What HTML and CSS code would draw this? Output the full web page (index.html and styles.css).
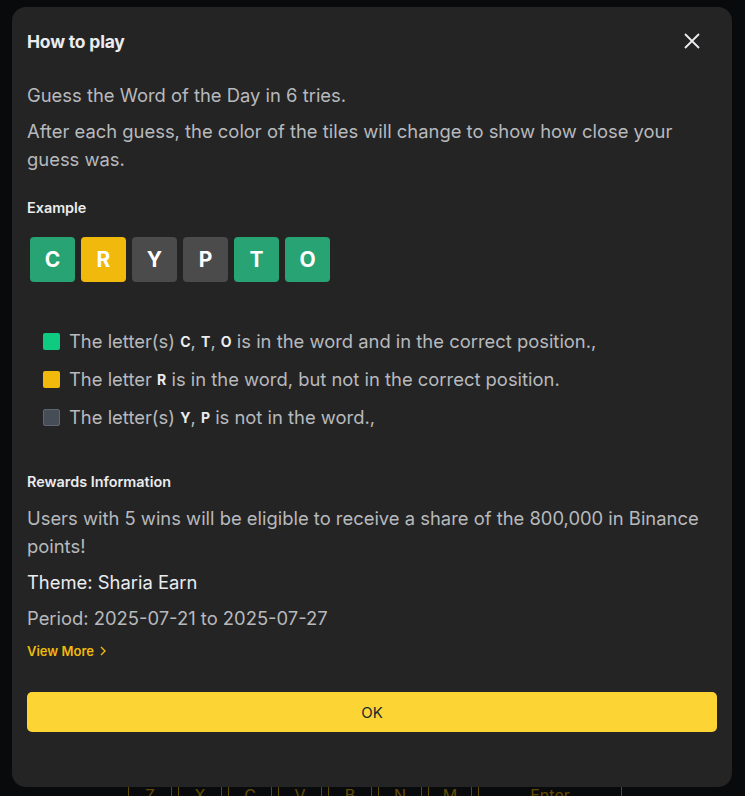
FILE: index.html
```html
<!DOCTYPE html>
<html lang="en">
<head>
    <meta charset="UTF-8">
    <meta name="viewport" content="width=device-width, initial-scale=1.0">
    <title>How to play</title>
    <link rel="stylesheet" href="styles.css">
</head>
<body>
    <div class="keyboard">
        <div class="key">Z</div>
        <div class="key">X</div>
        <div class="key">C</div>
        <div class="key">V</div>
        <div class="key">B</div>
        <div class="key">N</div>
        <div class="key">M</div>
        <div class="key key-wide">Enter</div>
    </div>

    <div class="overlay">
        <div class="modal">
            <div class="modal-header">
                <h2>How to play</h2>
                <button class="close-button" aria-label="Close">
                    <svg width="16" height="16" viewBox="0 0 16 16">
                        <path d="M1 1L15 15M15 1L1 15" stroke="#EAECEF" stroke-width="1.8" fill="none"/>
                    </svg>
                </button>
            </div>

            <p class="text">Guess the Word of the Day in 6 tries.</p>
            <p class="text">After each guess, the color of the tiles will change to show how close your guess was.</p>

            <h3 class="section-title title-example">Example</h3>
            <div class="tiles">
                <div class="tile green">C</div>
                <div class="tile yellow">R</div>
                <div class="tile gray">Y</div>
                <div class="tile gray">P</div>
                <div class="tile green">T</div>
                <div class="tile green">O</div>
            </div>

            <ul class="legend">
                <li><span class="swatch swatch-green"></span>The letter(s) <b>C</b>, <b>T</b>, <b>O</b> is in the word and in the correct position.,</li>
                <li><span class="swatch swatch-yellow"></span>The letter <b>R</b> is in the word, but not in the correct position.</li>
                <li><span class="swatch swatch-gray"></span>The letter(s) <b>Y</b>, <b>P</b> is not in the word.,</li>
            </ul>

            <h3 class="section-title title-rewards">Rewards Information</h3>
            <p class="text">Users with 5 wins will be eligible to receive a share of the 800,000 in Binance points!</p>
            <p class="text theme">Theme: Sharia Earn</p>
            <p class="text">Period: 2025-07-21 to 2025-07-27</p>
            <a class="view-more" href="#">View More
                <svg width="8" height="10" viewBox="0 0 8 10">
                    <path d="M2 1L6 5L2 9" stroke="#F0B90B" stroke-width="1.4" fill="none"/>
                </svg>
            </a>

            <button class="ok-button">OK</button>
        </div>
    </div>
</body>
</html>
```

FILE: styles.css
```css
body {
    font-family: 'Inter', 'Liberation Sans', sans-serif;
    background-color: #161a1e;
    margin: 0;
    padding: 0;
    height: 796px;
    overflow: hidden;
    position: relative;
}
.keyboard {
    position: absolute;
    top: 760px;
    left: 128px;
    display: flex;
    gap: 6px;
}
.key {
    width: 42px;
    height: 44px;
    border: 1px solid #F0B90B;
    border-radius: 4px;
    color: #F0B90B;
    font-size: 16px;
    display: flex;
    justify-content: center;
    align-items: center;
    padding-top: 12px;
    box-sizing: content-box;
}
.key-wide {
    width: 142px;
}
.overlay {
    position: absolute;
    inset: 0;
    background-color: rgba(0, 0, 0, 0.6);
}
.modal {
    position: absolute;
    top: 7px;
    left: 12px;
    width: 720px;
    height: 780px;
    box-sizing: border-box;
    padding: 23px 15px 0 15px;
    background-color: #242424;
    border-radius: 14px;
    color: #B7BDC6;
}
.modal-header {
    display: flex;
    justify-content: space-between;
    align-items: center;
    height: 22px;
    margin-bottom: 29px;
}
.modal-header h2 {
    margin: 0;
    font-size: 17.5px;
    font-weight: 700;
    letter-spacing: -0.2px;
    color: #EAECEF;
}
.close-button {
    background: none;
    border: none;
    padding: 0;
    margin-right: 17px;
    cursor: pointer;
    display: flex;
}
.text {
    margin: 0 0 8px 0;
    font-size: 18.4px;
    line-height: 28px;
    color: #B7B9BD;
}
.theme {
    color: #EAECEF;
}
.section-title {
    margin: 0;
    font-size: 14.4px;
    font-weight: 600;
    color: #EAECEF;
    line-height: 20px;
}
.title-example {
    margin-top: 25px;
}
.title-rewards {
    margin-top: 36px;
    margin-bottom: 12px;
}
.tiles {
    display: flex;
    gap: 6px;
    margin-top: 19px;
    padding-left: 3px;
}
.tile {
    width: 45px;
    height: 45px;
    border-radius: 4px;
    color: #FFFFFF;
    font-size: 21px;
    font-weight: 700;
    display: flex;
    justify-content: center;
    align-items: center;
}
.green {
    background-color: #27A374;
}
.yellow {
    background-color: #F0B90B;
}
.gray {
    background-color: #4B4B4B;
}
.legend {
    list-style: none;
    margin: 40px 0 0 0;
    padding: 0 0 0 16px;
}
.legend li {
    display: flex;
    align-items: center;
    height: 38px;
    font-size: 18.4px;
    color: #B7B9BD;
    white-space: pre;
}
.legend b {
    font-size: 14px;
    font-weight: 700;
    color: #EAECEF;
}
.swatch {
    width: 17px;
    height: 17px;
    margin-right: 9px;
    border-radius: 2px;
    box-sizing: border-box;
}
.swatch-green {
    background-color: #0ECB81;
}
.swatch-yellow {
    background-color: #F0B90B;
}
.swatch-gray {
    background-color: #474D57;
    border: 1px solid #5E6673;
}
.view-more {
    display: inline-flex;
    align-items: center;
    gap: 5px;
    height: 16px;
    font-size: 13px;
    font-weight: 600;
    color: #F0B90B;
    text-decoration: none;
    margin-top: 1px;
}
.ok-button {
    display: block;
    width: 100%;
    height: 40px;
    margin-top: 32px;
    background-color: #FCD535;
    border: none;
    border-radius: 5px;
    font-family: inherit;
    font-size: 15px;
    color: #202630;
    cursor: pointer;
}
```
